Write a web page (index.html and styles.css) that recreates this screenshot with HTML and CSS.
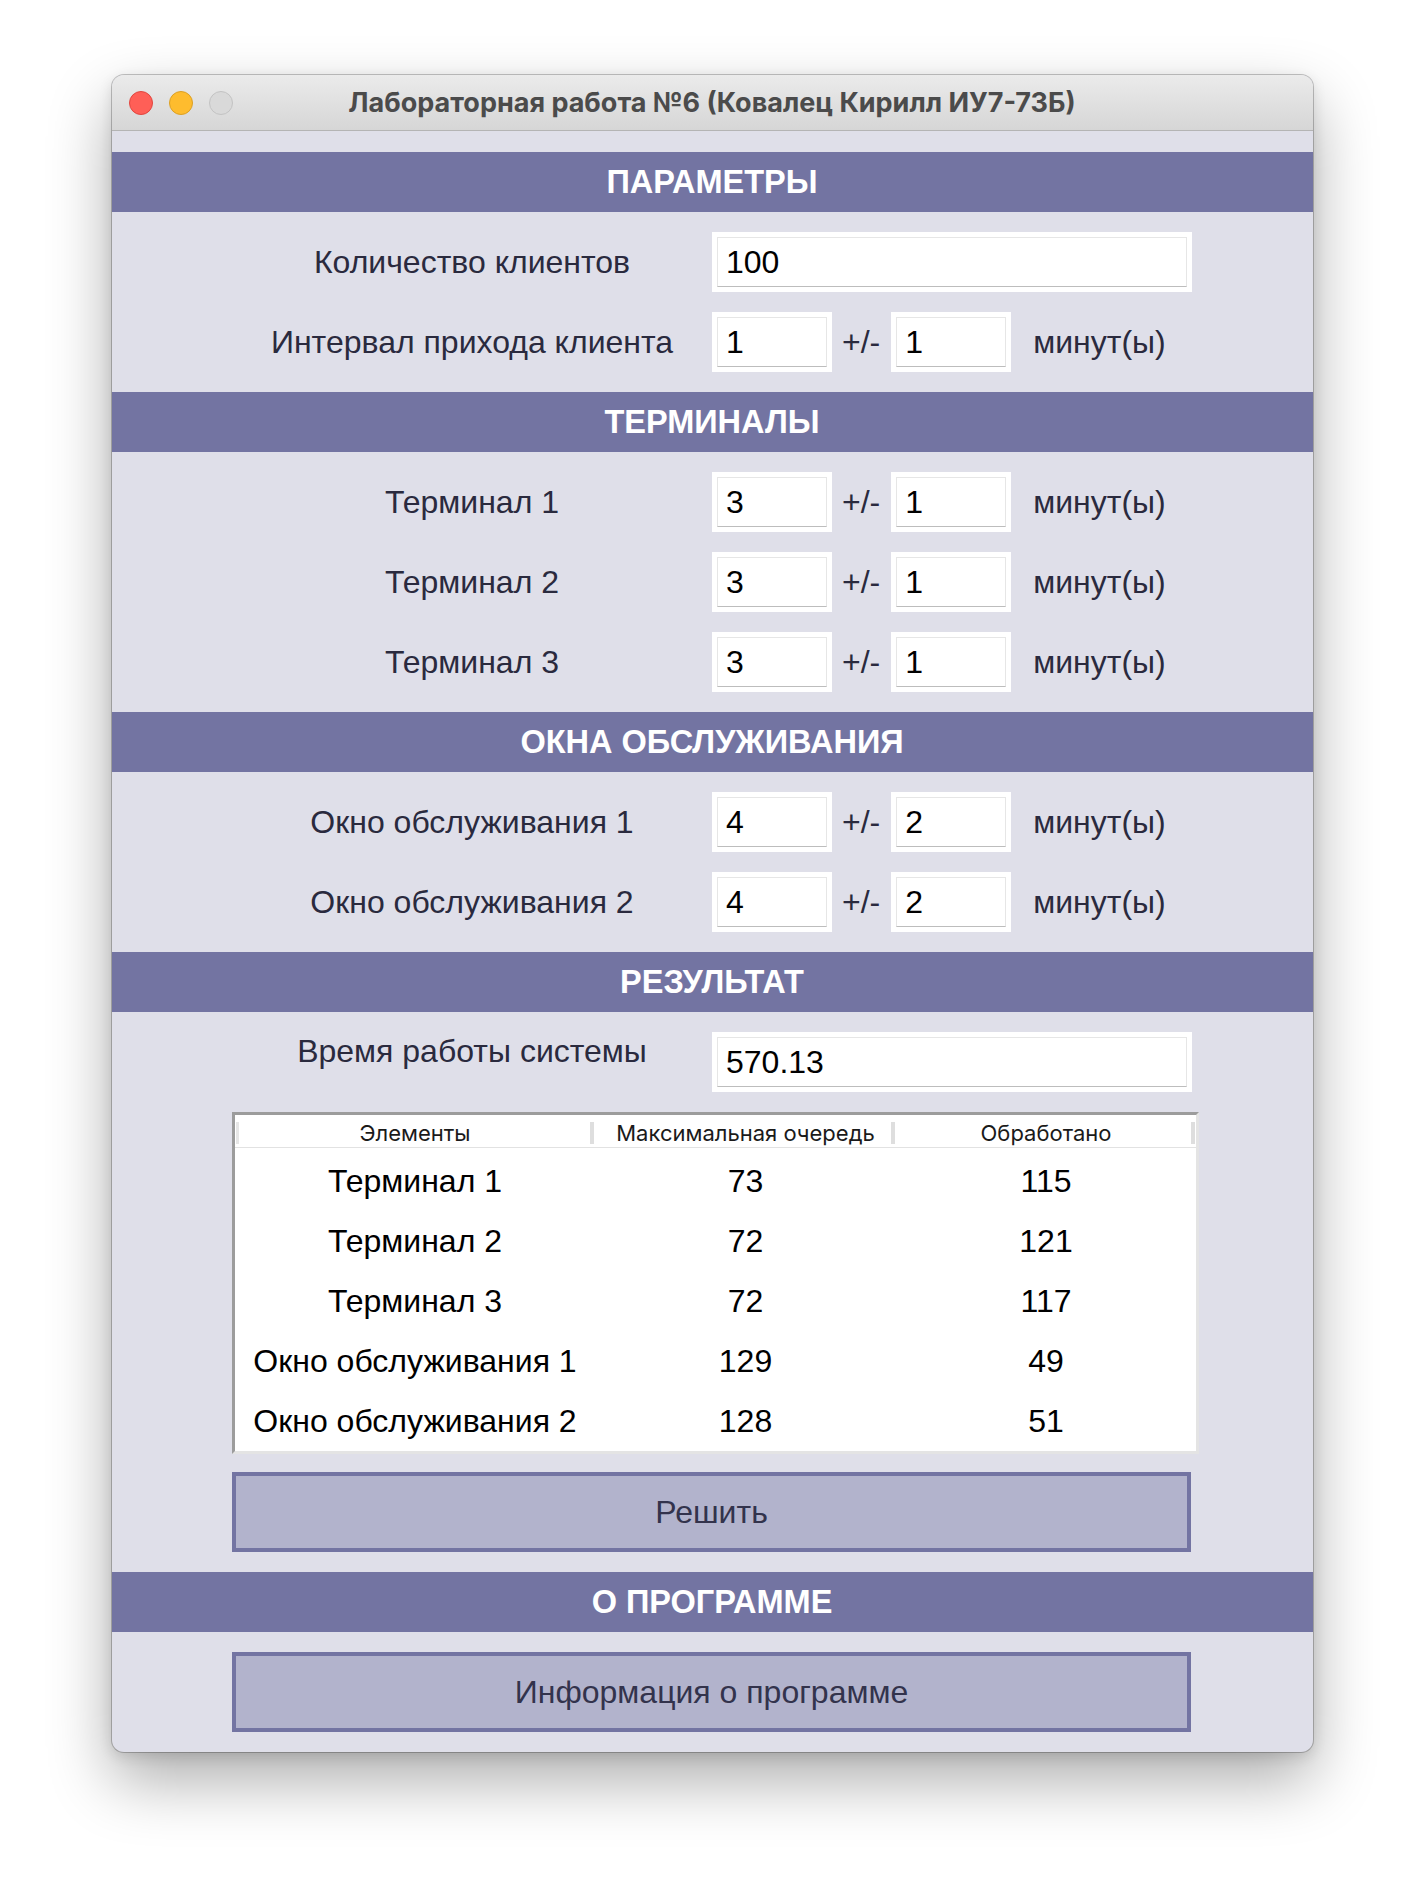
FILE: index.html
```html
<!DOCTYPE html>
<html lang="ru">
<head>
<meta charset="utf-8">
<title>Лабораторная работа №6</title>
<link rel="stylesheet" href="styles.css">
</head>
<body>
<div class="window">
  <div class="titlebar">
    <div class="lights">
      <span class="light red"></span>
      <span class="light yellow"></span>
      <span class="light gray"></span>
    </div>
    <div class="title">Лабораторная работа №6 (Ковалец Кирилл ИУ7-73Б)</div>
    <div></div>
  </div>
  <div class="content">
    <div class="section-head">ПАРАМЕТРЫ</div>
    <div class="section">
      <div class="row">
        <div class="label">Количество клиентов</div>
        <div class="field"><div class="entry wide"><div class="entry-in">100</div></div></div>
      </div>
      <div class="row">
        <div class="label">Интервал прихода клиента</div>
        <div class="field">
          <div class="entry small"><div class="entry-in">1</div></div>
          <span class="pm">+/-</span>
          <div class="entry small"><div class="entry-in">1</div></div>
          <span class="unit">минут(ы)</span>
        </div>
      </div>
    </div>

    <div class="section-head">ТЕРМИНАЛЫ</div>
    <div class="section">
      <div class="row">
        <div class="label">Терминал 1</div>
        <div class="field">
          <div class="entry small"><div class="entry-in">3</div></div>
          <span class="pm">+/-</span>
          <div class="entry small"><div class="entry-in">1</div></div>
          <span class="unit">минут(ы)</span>
        </div>
      </div>
      <div class="row">
        <div class="label">Терминал 2</div>
        <div class="field">
          <div class="entry small"><div class="entry-in">3</div></div>
          <span class="pm">+/-</span>
          <div class="entry small"><div class="entry-in">1</div></div>
          <span class="unit">минут(ы)</span>
        </div>
      </div>
      <div class="row">
        <div class="label">Терминал 3</div>
        <div class="field">
          <div class="entry small"><div class="entry-in">3</div></div>
          <span class="pm">+/-</span>
          <div class="entry small"><div class="entry-in">1</div></div>
          <span class="unit">минут(ы)</span>
        </div>
      </div>
    </div>

    <div class="section-head">ОКНА ОБСЛУЖИВАНИЯ</div>
    <div class="section">
      <div class="row">
        <div class="label">Окно обслуживания 1</div>
        <div class="field">
          <div class="entry small"><div class="entry-in">4</div></div>
          <span class="pm">+/-</span>
          <div class="entry small"><div class="entry-in">2</div></div>
          <span class="unit">минут(ы)</span>
        </div>
      </div>
      <div class="row">
        <div class="label">Окно обслуживания 2</div>
        <div class="field">
          <div class="entry small"><div class="entry-in">4</div></div>
          <span class="pm">+/-</span>
          <div class="entry small"><div class="entry-in">2</div></div>
          <span class="unit">минут(ы)</span>
        </div>
      </div>
    </div>

    <div class="section-head">РЕЗУЛЬТАТ</div>
    <div class="section">
      <div class="row row-top">
        <div class="label label-top">Время работы системы</div>
        <div class="field"><div class="entry wide"><div class="entry-in">570.13</div></div></div>
      </div>
      <div class="block">
        <div class="table">
          <div class="thead">
            <div class="th th-first">Элементы</div>
            <div class="th">Максимальная очередь</div>
            <div class="th">Обработано</div>
          </div>
          <div class="tbody">
            <div class="tr"><div class="td">Терминал 1</div><div class="td">73</div><div class="td">115</div></div>
            <div class="tr"><div class="td">Терминал 2</div><div class="td">72</div><div class="td">121</div></div>
            <div class="tr"><div class="td">Терминал 3</div><div class="td">72</div><div class="td">117</div></div>
            <div class="tr"><div class="td">Окно обслуживания 1</div><div class="td">129</div><div class="td">49</div></div>
            <div class="tr"><div class="td">Окно обслуживания 2</div><div class="td">128</div><div class="td">51</div></div>
          </div>
        </div>
        <div class="button solve">Решить</div>
      </div>
    </div>

    <div class="section-head">О ПРОГРАММЕ</div>
    <div class="section">
      <div class="block">
        <div class="button">Информация о программе</div>
      </div>
    </div>
  </div>
</div>
</body>
</html>
```

FILE: styles.css
```css
* {
  box-sizing: border-box;
}

html,
body {
  margin: 0;
  padding: 0;
  background: #ffffff;
}

body {
  font-family: "Liberation Sans", Arial, Helvetica, sans-serif;
  height: 1900px;
}

.window {
  width: 1201px;
  margin: 75px auto 0;
  border-radius: 12px;
  overflow: hidden;
  background: #dfdfe9;
  box-shadow: 0 0 0 1px rgba(0, 0, 0, 0.22), 0 28px 64px rgba(0, 0, 0, 0.33), 0 4px 14px rgba(0, 0, 0, 0.12);
}

/* title bar */
.titlebar {
  height: 56px;
  border-bottom: 1px solid #b4b4b4;
  background: linear-gradient(#ebebeb, #d6d6d6);
  display: grid;
  grid-template-columns: 1fr auto 1fr;
  align-items: center;
}

.lights {
  display: flex;
  gap: 16px;
  padding-left: 17px;
  padding-top: 1px;
}

.light {
  width: 24px;
  height: 24px;
  border-radius: 50%;
  display: block;
}

.light.red {
  background: #ff5f57;
  border: 1px solid #e1463f;
}

.light.yellow {
  background: #febc2e;
  border: 1px solid #dca024;
}

.light.gray {
  background: #d9d9d9;
  border: 1px solid #c3c3c3;
}

.title {
  font-family: Inter, "Open Sans", sans-serif;
  font-weight: 700;
  font-size: 27px;
  color: #4b4b4b;
  white-space: nowrap;
}

/* content */
.content {
  padding-top: 21px;
}

.section-head {
  height: 60px;
  background: #7374a2;
  color: #ffffff;
  font-weight: 700;
  font-size: 32.5px;
  display: flex;
  align-items: center;
  justify-content: center;
}

.section {
  padding: 20px 0;
  display: flex;
  flex-direction: column;
  gap: 20px;
}

.row {
  width: 960px;
  margin: 0 auto;
  height: 60px;
  display: grid;
  grid-template-columns: 480px 480px;
  align-items: center;
}

.row-top {
  align-items: start;
}

.label {
  text-align: center;
  font-size: 32px;
  color: #2a2a3e;
}

.label-top {
  padding-top: 1px;
}

.field {
  display: flex;
  align-items: center;
  height: 60px;
}

.entry {
  background: #ffffff;
  padding: 5px;
  height: 60px;
}

.entry.small {
  width: 120px;
}

.entry.wide {
  width: 480px;
}

.entry-in {
  height: 100%;
  border: 1px solid #e6e6e6;
  border-bottom-color: #bdbdbd;
  padding-left: 8px;
  display: flex;
  align-items: center;
  font-size: 32px;
  color: #000000;
}

.pm {
  margin: 0 11px 0 10px;
  font-size: 32px;
  color: #2a2a3e;
}

.unit {
  margin-left: 22px;
  font-size: 32px;
  color: #2a2a3e;
}

.block {
  width: 960px;
  margin: 0 auto;
}

/* table */
.table {
  width: 967px;
  background: #ffffff;
  border: 3px solid;
  border-color: #9c9c9c #e4e4e4 #e4e4e4 #9c9c9c;
}

.thead {
  display: grid;
  grid-template-columns: 360px 301px 300px;
  height: 33px;
  border-bottom: 1px solid #e2e2e2;
}

.th {
  font-family: Inter, "Noto Sans", sans-serif;
  font-size: 22px;
  color: #1a1a1a;
  text-align: center;
  line-height: 36px;
  background: linear-gradient(#dedede, #dedede) right 1px center / 4px 22px no-repeat;
}

.th-first {
  background:
    linear-gradient(#e6e6e6, #e6e6e6) left 1px center / 3px 22px no-repeat,
    linear-gradient(#dedede, #dedede) right 1px center / 4px 22px no-repeat;
}

.tbody {
  padding-top: 3px;
}

.tr {
  display: grid;
  grid-template-columns: 360px 301px 300px;
  height: 60px;
  align-items: center;
}

.td {
  text-align: center;
  font-size: 32px;
  color: #000000;
}

/* buttons */
.button {
  width: 959px;
  height: 80px;
  border: 4px solid #7374a2;
  background: #b2b3cc;
  color: #33334c;
  font-size: 32px;
  display: flex;
  align-items: center;
  justify-content: center;
}

.button.solve {
  margin-top: 18px;
}
```
